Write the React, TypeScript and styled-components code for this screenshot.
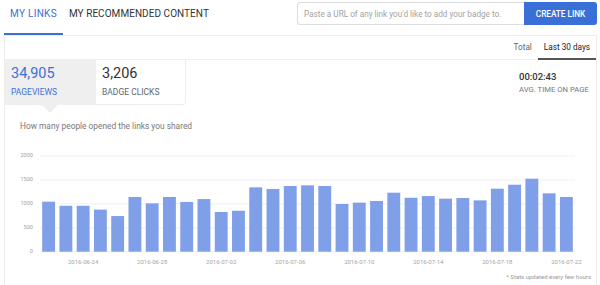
import React, { useState } from 'react';
import styled, { createGlobalStyle } from 'styled-components';

const GlobalStyle = createGlobalStyle`
  html, body {
    margin: 0;
    padding: 0;
    background: #fff;
    font-family: Roboto, 'Liberation Sans', Arial, sans-serif;
    color: #333;
  }
  * { box-sizing: border-box; }
`;

const Page = styled.div`
  width: 600px;
  height: 285px;
  overflow: hidden;
`;

const Header = styled.div`
  display: flex;
  align-items: flex-start;
  justify-content: space-between;
  height: 35px;
  padding: 0 3px 0 4px;
`;

const Tabs = styled.div`
  display: flex;
`;

const Tab = styled.div<{ active?: boolean }>`
  height: 35px;
  padding: 8px 6px 0;
  font-size: 10px;
  letter-spacing: ${({ active }) => (active ? 0.3 : 0.05)}px;
  color: ${({ active }) => (active ? '#3d6fd6' : '#333')};
  border-bottom: 2px solid ${({ active }) => (active ? '#3d6fd6' : 'transparent')};
`;

const LinkForm = styled.form`
  display: flex;
  margin-top: 2px;
  height: 23px;
`;

const UrlInput = styled.input`
  width: 227px;
  height: 23px;
  border: 1px solid #dedede;
  border-right: none;
  border-radius: 3px 0 0 3px;
  padding: 0 6px;
  font-family: inherit;
  font-size: 8.2px;
  outline: none;
  &::placeholder { color: #a3a3a3; }
`;

const CreateButton = styled.button`
  width: 73px;
  height: 23px;
  border: none;
  border-radius: 0 3px 3px 0;
  background: #3b6fd8;
  color: #fff;
  font-family: inherit;
  font-size: 8.2px;
  font-weight: 500;
  padding: 0;
`;

const Panel = styled.div`
  margin: 0 3px 0 4px;
  border: 1px solid #ededed;
  border-bottom: none;
  height: 260px;
`;

const RangeRow = styled.div`
  display: flex;
  justify-content: flex-end;
  height: 24px;
  border-bottom: 1px solid #f0f0f0;
`;

const RangeTab = styled.div<{ active?: boolean }>`
  height: 24px;
  padding: 6px 6px 0;
  font-size: 8.2px;
  color: ${({ active }) => (active ? '#222' : '#666')};
  border-bottom: 2px solid ${({ active }) => (active ? '#555' : 'transparent')};
  margin-bottom: -1px;
`;

const StatsRow = styled.div`
  display: flex;
  height: 45px;
`;

const StatCard = styled.div<{ active?: boolean }>`
  position: relative;
  width: ${({ active }) => (active ? 91 : 90)}px;
  padding: 5px 6px 0;
  background: ${({ active }) => (active ? '#efefef' : '#fff')};
  border-right: ${({ active }) => (active ? 'none' : '1px solid #eee')};
  border-bottom: ${({ active }) => (active ? 'none' : '1px solid #eee')};
  border-radius: 0 0 ${({ active }) => (active ? 0 : 3)}px 0;
  color: ${({ active }) => (active ? '#3d6fd6' : '#333')};

  &::after {
    content: '';
    display: ${({ active }) => (active ? 'block' : 'none')};
    position: absolute;
    left: 37px;
    bottom: -8px;
    border-left: 8px solid transparent;
    border-right: 8px solid transparent;
    border-top: 8px solid #efefef;
  }
`;

const StatValue = styled.div`
  font-size: 14.5px;
  line-height: 18px;
`;

const StatLabel = styled.div<{ active?: boolean }>`
  margin-top: 4px;
  font-size: 8.5px;
  line-height: 11px;
  color: ${({ active }) => (active ? '#3d6fd6' : '#666')};
`;

const Spacer = styled.div`
  flex: 1;
`;

const TimeStat = styled.div`
  width: 77px;
  padding-top: 11px;
`;

const TimeValue = styled.div`
  font-size: 9.5px;
  font-weight: 500;
  line-height: 12px;
  color: #333;
`;

const TimeLabel = styled.div`
  margin-top: 2px;
  font-size: 7.7px;
  line-height: 10px;
  color: #777;
`;

const Subtitle = styled.div`
  margin-top: 15px;
  padding-left: 15px;
  font-size: 8.35px;
  line-height: 12px;
  color: #777;
`;

const ChartSvg = styled.svg`
  display: block;
  margin-top: 3px;
  width: 592px;
  height: 137px;
`;

const Footnote = styled.div`
  padding-right: 5px;
  text-align: right;
  font-size: 6px;
  line-height: 10px;
  color: #999;
`;

const values = [
  1045, 960, 960, 880, 745, 1143, 1010, 1143, 1040, 1100, 830, 856, 1345, 1310, 1373,
  1387, 1373, 997, 1025, 1060, 1233, 1128, 1163, 1108, 1122, 1073, 1317, 1400, 1526, 1220, 1143,
];

const dateLabel = (i: number) => {
  const d = new Date(Date.UTC(2016, 5, 22 + i));
  return d.toISOString().slice(0, 10);
};

const ViewsChart: React.FC = () => {
  const left = 35;
  const right = 570;
  const base = 116.7;
  const top = 21;
  const band = (right - left) / values.length;
  const y = (v: number) => base - ((base - top) * v) / 2000;

  return (
    <ChartSvg viewBox="0 0 592 137">
      {[0, 500, 1000, 1500, 2000].map((t) => (
        <g key={t}>
          <line x1={left} x2={right} y1={y(t)} y2={y(t)} stroke="#f0f0f0" strokeWidth={1} />
          <text x={28} y={y(t)} fontSize={5.6} fill="#a5a5a5" textAnchor="end" dominantBaseline="middle">
            {t}
          </text>
        </g>
      ))}
      {values.map((v, i) => (
        <rect
          key={i}
          x={left + i * band + 2.2}
          y={y(v)}
          width={band - 4.4}
          height={base - y(v)}
          fill="#7f9fe9"
        />
      ))}
      {values.map((_, i) =>
        i % 4 === 2 ? (
          <text
            key={i}
            x={left + i * band + band / 2}
            y={127.7}
            fontSize={6}
            fill="#a5a5a5"
            textAnchor="middle"
            dominantBaseline="middle"
          >
            {dateLabel(i)}
          </text>
        ) : null,
      )}
    </ChartSvg>
  );
};

const App: React.FC = () => {
  const [range, setRange] = useState('30');
  const [tab, setTab] = useState('links');

  return (
    <Page>
      <GlobalStyle />
      <Header>
        <Tabs>
          <Tab active={tab === 'links'} onClick={() => setTab('links')}>MY LINKS</Tab>
          <Tab active={tab === 'content'} onClick={() => setTab('content')}>MY RECOMMENDED CONTENT</Tab>
        </Tabs>
        <LinkForm onSubmit={(e) => e.preventDefault()}>
          <UrlInput placeholder="Paste a URL of any link you'd like to add your badge to." />
          <CreateButton type="submit">CREATE LINK</CreateButton>
        </LinkForm>
      </Header>
      <Panel>
        <RangeRow>
          <RangeTab active={range === 'total'} onClick={() => setRange('total')}>Total</RangeTab>
          <RangeTab active={range === '30'} onClick={() => setRange('30')}>Last 30 days</RangeTab>
        </RangeRow>
        <StatsRow>
          <StatCard active>
            <StatValue>34,905</StatValue>
            <StatLabel active>PAGEVIEWS</StatLabel>
          </StatCard>
          <StatCard>
            <StatValue>3,206</StatValue>
            <StatLabel>BADGE CLICKS</StatLabel>
          </StatCard>
          <Spacer />
          <TimeStat>
            <TimeValue>00:02:43</TimeValue>
            <TimeLabel>AVG. TIME ON PAGE</TimeLabel>
          </TimeStat>
        </StatsRow>
        <Subtitle>How many people opened the links you shared</Subtitle>
        <ViewsChart />
        <Footnote>* Stats updated every few hours</Footnote>
      </Panel>
    </Page>
  );
};

export default App;
